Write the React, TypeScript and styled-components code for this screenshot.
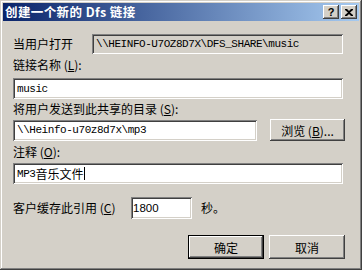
import * as React from "react";
import styled, { createGlobalStyle } from "styled-components";

const GlobalStyle = createGlobalStyle`
  html, body {
    margin: 0;
    padding: 0;
    background: #d4d0c8;
  }
`;

const cjk = `"Noto Sans CJK SC", "Noto Sans", sans-serif`;
const mono = `"Liberation Mono", "Noto Sans CJK SC", monospace`;

const Window = styled.div`
  width: 362px;
  height: 270px;
  box-sizing: border-box;
  padding: 3px;
  background: #d4d0c8;
  box-shadow: inset -1px -1px #404040, inset 1px 1px #d4d0c8,
    inset -2px -2px #808080, inset 2px 2px #ffffff;
  display: flex;
  flex-direction: column;
  font-family: ${cjk};
  font-size: 12px;
  color: #000;
`;

const TitleBar = styled.div`
  height: 18px;
  display: flex;
  align-items: center;
  justify-content: space-between;
  padding: 0 2px 0 2px;
  background: linear-gradient(to right, #0a246a, #a6caf0);
`;

const Title = styled.div`
  color: #fff;
  font-weight: bold;
  font-size: 12.5px;
  line-height: 18px;
  letter-spacing: 0.4px;
`;

const TitleButtons = styled.div`
  display: flex;
  gap: 2px;
`;

const TitleButton = styled.div`
  width: 16px;
  height: 14px;
  box-sizing: border-box;
  background: #d4d0c8;
  box-shadow: inset -1px -1px #404040, inset 1px 1px #ffffff,
    inset -2px -2px #808080;
  display: flex;
  align-items: center;
  justify-content: center;
  font-family: "Liberation Sans", sans-serif;
  font-weight: bold;
  font-size: 11px;
  line-height: 12px;
`;

const Body = styled.div`
  display: flex;
  flex-direction: column;
  padding: 13px 0 0 10px;
`;

const Row = styled.div<{ $top?: number; $gap?: number }>`
  display: flex;
  align-items: center;
  gap: ${(p) => p.$gap ?? 0}px;
  margin-top: ${(p) => p.$top ?? 0}px;
`;

const Label = styled.div<{ $top?: number; $width?: number }>`
  line-height: 14px;
  height: 14px;
  margin-top: ${(p) => p.$top ?? 0}px;
  width: ${(p) => (p.$width ? `${p.$width}px` : "auto")};
  white-space: nowrap;
  u {
    text-decoration: underline;
  }
`;

const Field = styled.div<{ $width: number; $height?: number; $readOnly?: boolean; $sans?: boolean }>`
  width: ${(p) => p.$width}px;
  height: ${(p) => p.$height ?? 21}px;
  box-sizing: border-box;
  padding: 0 ${(p) => (p.$sans ? 2 : 4)}px;
  background: ${(p) => (p.$readOnly ? "#d4d0c8" : "#ffffff")};
  box-shadow: inset 1px 1px #808080, inset -1px -1px #ffffff,
    inset 2px 2px #404040, inset -2px -2px #d4d0c8;
  display: flex;
  align-items: center;
  font-family: ${(p) => (p.$sans ? `"Liberation Sans", sans-serif` : mono)};
  font-size: ${(p) => (p.$sans ? "11.5px" : "11px")};
  letter-spacing: ${(p) => (p.$sans ? "0" : "-0.45px")};
  white-space: nowrap;
  overflow: hidden;
`;

const Cjk = styled.span`
  font-family: ${cjk};
  font-size: 12px;
  letter-spacing: 0;
`;

const Caret = styled.span`
  display: inline-block;
  width: 1px;
  height: 13px;
  background: #000;
  margin-left: 1px;
`;

const Button = styled.div<{ $default?: boolean; $width: number; $height: number }>`
  width: ${(p) => p.$width}px;
  height: ${(p) => p.$height}px;
  box-sizing: border-box;
  background: #d4d0c8;
  display: flex;
  align-items: center;
  justify-content: center;
  font-size: 12px;
  white-space: nowrap;
  box-shadow: ${(p) =>
    p.$default
      ? "inset 0 0 0 1px #000, inset -2px -2px #404040, inset 2px 2px #ffffff, inset -3px -3px #808080"
      : "inset -1px -1px #404040, inset 1px 1px #ffffff, inset -2px -2px #808080"};
`;

const Footer = styled.div`
  display: flex;
  justify-content: flex-end;
  gap: 5px;
  margin-top: 16px;
  padding-right: 14px;
`;

const Spacer = styled.div<{ $w: number }>`
  width: ${(p) => p.$w}px;
`;

const CloseIcon = () => (
  <svg width="8" height="7" viewBox="0 0 8 7">
    <path d="M0 0h2l2 2 2-2h2v1L5 3.5 8 6v1H6L4 5 2 7H0V6l3-2.5L0 1z" fill="#000" />
  </svg>
);

const App = () => (
  <>
    <GlobalStyle />
    <Window>
      <TitleBar>
        <Title>创建一个新的 Dfs 链接</Title>
        <TitleButtons>
          <TitleButton>?</TitleButton>
          <TitleButton>
            <CloseIcon />
          </TitleButton>
        </TitleButtons>
      </TitleBar>
      <Body>
        <Row>
          <Label $width={79}>当用户打开</Label>
          <Field $width={251} $height={20} $readOnly>
            \\HEINFO-U7OZ8D7X\DFS_SHARE\music
          </Field>
        </Row>
        <Label $top={4}>
          链接名称 (<u>L</u>):
        </Label>
        <Row $top={6}>
          <Field $width={330}>music</Field>
        </Row>
        <Label $top={3}>
          将用户发送到此共享的目录 (<u>S</u>):
        </Label>
        <Row $top={3} $gap={13}>
          <Field $width={244} $height={21}>
            \\Heinfo-u70z8d7x\mp3
          </Field>
          <Button $width={75} $height={22}>
            浏览 (<u>B</u>)...
          </Button>
        </Row>
        <Label $top={4}>
          注释 (<u>O</u>):
        </Label>
        <Row $top={4}>
          <Field $width={330}>
            MP3<Cjk>音乐文件</Cjk>
            <Caret />
          </Field>
        </Row>
        <Row $top={13}>
          <Label $width={118}>
            客户缓存此引用 (<u>C</u>)
          </Label>
          <Field $width={61} $height={22} $sans>
            1800
          </Field>
          <Spacer $w={9} />
          <Label>秒。</Label>
        </Row>
      </Body>
      <Footer>
        <Button $default $width={76} $height={24}>
          确定
        </Button>
        <Button $width={76} $height={24}>
          取消
        </Button>
      </Footer>
    </Window>
  </>
);

export default App;
